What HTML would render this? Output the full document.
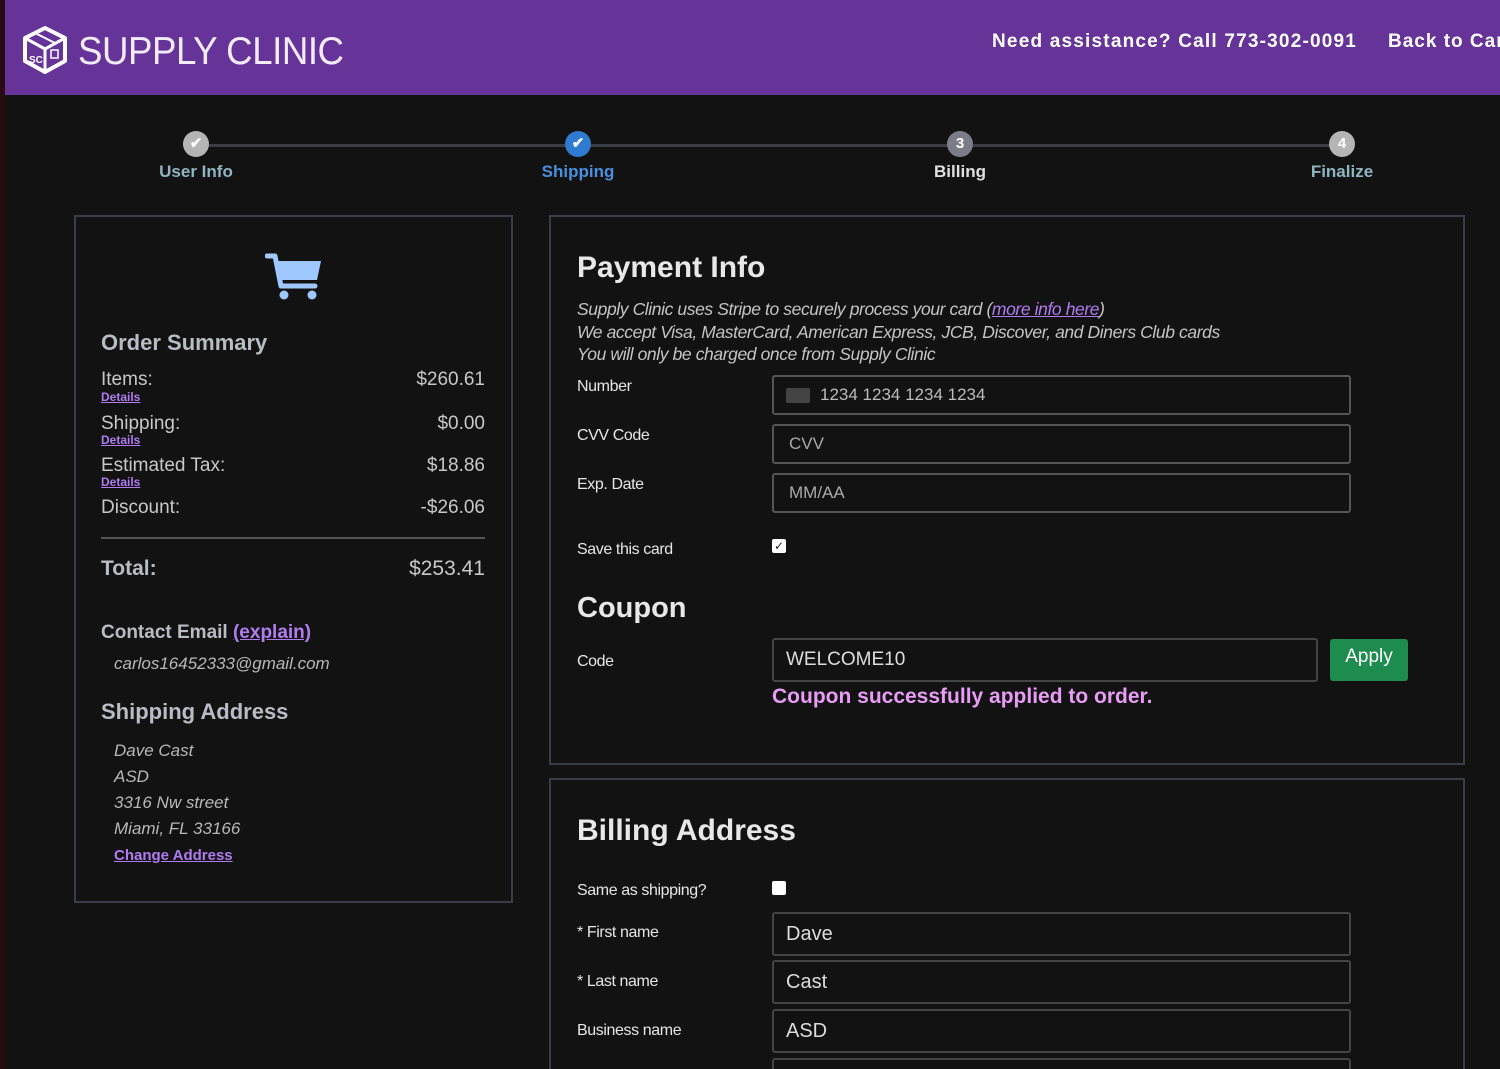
<!DOCTYPE html>
<html style="width:1500px;height:1069px;overflow:hidden"><head><meta charset="utf-8"><style>
*{box-sizing:border-box;margin:0;padding:0}
body{width:1500px;height:1069px;overflow:hidden;background:#121212;font-family:"Liberation Sans",sans-serif;color:#ddd;position:relative}
.a{position:absolute;white-space:nowrap}
.hdr{left:5px;top:0;width:1495px;height:95px;background:#663399}
.strip{left:0;top:0;width:5px;height:1069px;background:#2a0a12}
.box{position:absolute;border:2px solid #3a3d45}
.lbl{font-size:16px;color:#e6e6e6;letter-spacing:-0.4px}
.inp{position:absolute;border:2px solid #555;border-radius:3px;background:#121212;font-size:18px;color:#ddd;padding-left:12px;display:flex;align-items:center}
.det{font-size:12px;font-weight:bold;color:#b07cf0;text-decoration:underline}
.row{font-size:19px;color:#c8c8c8}
.h3{font-weight:bold;color:#b8bcc4;font-size:21px}
.it{font-style:italic;color:#b8b8b8;font-size:17px}
.step{font-weight:bold;font-size:17px;transform:translateX(-50%)}
.c{position:absolute;width:26px;height:26px;border-radius:50%;transform:translate(-50%,-50%);color:#fff;font-weight:bold;font-size:15px;text-align:center;line-height:26px}
</style></head><body>
<div class="a strip"></div>
<div class="a hdr"></div>
<svg class="a" style="left:22px;top:25px" width="46" height="50" viewBox="0 0 46 50"><path d="M23 3 L43 13 L43 36 L23 47 L3 36 L3 13 Z" fill="none" stroke="#fff" stroke-width="4" stroke-linejoin="round"/><path d="M3 13 L23 24 L43 13 M23 24 L23 47" stroke="#fff" stroke-width="3" fill="none"/><path d="M13 8 L33 18" stroke="#fff" stroke-width="2"/><text x="7" y="38" font-size="10" font-weight="bold" fill="#fff" font-family="Liberation Sans">SC</text><rect x="29" y="25" width="7" height="8" fill="none" stroke="#fff" stroke-width="1.5"/></svg>
<div class="a" style="left:78px;top:30px;font-size:39px;color:#f2ecf8;letter-spacing:-0.5px;transform:scaleX(0.94);transform-origin:left">SUPPLY CLINIC</div>
<div class="a" style="left:992px;top:31px;font-size:19px;font-weight:bold;color:#fff;letter-spacing:1.2px">Need assistance? Call 773-302-0091</div>
<div class="a" style="left:1388px;top:31px;font-size:19px;font-weight:bold;color:#fff;letter-spacing:1px">Back to Cart</div>

<div class="a" style="left:196px;top:144px;width:1146px;height:3px;background:#3c3c46"></div>
<div class="c" style="left:196px;top:144px;background:#b5b5b5">✔</div>
<div class="c" style="left:578px;top:144px;background:#2e7bcf">✔</div>
<div class="c" style="left:960px;top:144px;background:#7a7d88">3</div>
<div class="c" style="left:1342px;top:144px;background:#b5b5b5">4</div>
<div class="a step" style="left:196px;top:162px;color:#8fb5c0">User Info</div>
<div class="a step" style="left:578px;top:162px;color:#4a8fe0">Shipping</div>
<div class="a step" style="left:960px;top:162px;color:#e0e0e0">Billing</div>
<div class="a step" style="left:1342px;top:162px;color:#8fb5c0">Finalize</div>

<div class="box" style="left:74px;top:215px;width:439px;height:688px"></div>
<svg class="a" style="left:265px;top:252px" width="58" height="50" viewBox="0 0 58 50"><path d="M2 4 L10 4 L16 34 L50 34" fill="none" stroke="#9ec8ff" stroke-width="5" stroke-linecap="round" stroke-linejoin="round"/><path d="M11 9 L56 9 L52 28 L15 28 Z" fill="#9ec8ff"/><circle cx="19" cy="43" r="4.5" fill="#9ec8ff"/><circle cx="47" cy="43" r="4.5" fill="#9ec8ff"/></svg>
<div class="a h3" style="left:101px;top:330px;font-size:22px">Order Summary</div>
<div class="a row" style="left:101px;top:369px">Items:</div><div class="a row" style="right:1015px;top:369px">$260.61</div>
<div class="a det" style="left:101px;top:390px">Details</div>
<div class="a row" style="left:101px;top:413px">Shipping:</div><div class="a row" style="right:1015px;top:413px">$0.00</div>
<div class="a det" style="left:101px;top:433px">Details</div>
<div class="a row" style="left:101px;top:455px">Estimated Tax:</div><div class="a row" style="right:1015px;top:455px">$18.86</div>
<div class="a det" style="left:101px;top:475px">Details</div>
<div class="a row" style="left:101px;top:497px">Discount:</div><div class="a row" style="right:1015px;top:497px">-$26.06</div>
<div class="a" style="left:101px;top:537px;width:384px;height:2px;background:#555"></div>
<div class="a h3" style="left:101px;top:557px">Total:</div><div class="a row" style="right:1015px;top:557px;font-size:21px">$253.41</div>
<div class="a h3" style="left:101px;top:622px;font-size:19px">Contact Email <span style="color:#b07cf0;text-decoration:underline">(explain)</span></div>
<div class="a it" style="left:114px;top:654px">carlos16452333@gmail.com</div>
<div class="a h3" style="left:101px;top:699px;font-size:22px">Shipping Address</div>
<div class="a it" style="left:114px;top:741px">Dave Cast</div>
<div class="a it" style="left:114px;top:767px">ASD</div>
<div class="a it" style="left:114px;top:793px">3316 Nw street</div>
<div class="a it" style="left:114px;top:819px">Miami, FL 33166</div>
<div class="a" style="left:114px;top:847px;font-size:15px;font-weight:bold;color:#b07cf0;text-decoration:underline">Change Address</div>

<div class="box" style="left:549px;top:215px;width:916px;height:550px"></div>
<div class="a" style="left:577px;top:251px;font-size:30px;font-weight:bold;color:#e8e8e8">Payment Info</div>
<div class="a it" style="left:577px;top:298px;font-size:17.5px;color:#c4c4c4;letter-spacing:-0.4px;line-height:22.5px">Supply Clinic uses Stripe to securely process your card (<span style="color:#b07cf0;text-decoration:underline">more info here</span>)<br>We accept Visa, MasterCard, American Express, JCB, Discover, and Diners Club cards<br>You will only be charged once from Supply Clinic</div>
<div class="a lbl" style="left:577px;top:378px">Number</div>
<div class="inp" style="left:772px;top:375px;width:579px;height:40px;font-size:17px;color:#bbb"><span style="display:inline-block;width:24px;height:15px;background:#444;border-radius:2px;margin-right:10px"></span>1234 1234 1234 1234</div>
<div class="a lbl" style="left:577px;top:427px">CVV Code</div>
<div class="inp" style="left:772px;top:424px;width:579px;height:40px;font-size:17px;color:#aaa;padding-left:15px">CVV</div>
<div class="a lbl" style="left:577px;top:476px">Exp. Date</div>
<div class="inp" style="left:772px;top:473px;width:579px;height:40px;font-size:17px;color:#aaa;padding-left:15px">MM/AA</div>
<div class="a lbl" style="left:577px;top:541px">Save this card</div>
<div class="a" style="left:772px;top:539px;width:14px;height:14px;background:#fff;border-radius:2px;color:#222;font-size:12px;line-height:14px;text-align:center">✓</div>
<div class="a" style="left:577px;top:592px;font-size:29px;font-weight:bold;color:#e8e8e8">Coupon</div>
<div class="a lbl" style="left:577px;top:653px">Code</div>
<div class="inp" style="left:772px;top:638px;width:546px;height:44px;border-color:#444;font-size:19px">WELCOME10</div>
<div class="a" style="left:1330px;top:639px;width:78px;height:42px;background:#1e8c4e;border-radius:3px;color:#fff;font-size:19px;text-align:center;padding-top:7px">Apply</div>
<div class="a" style="left:772px;top:685px;font-size:21px;font-weight:bold;color:#e99cf5;letter-spacing:0px">Coupon successfully applied to order.</div>

<div class="box" style="left:549px;top:778px;width:916px;height:320px"></div>
<div class="a" style="left:577px;top:814px;font-size:30px;font-weight:bold;color:#e8e8e8">Billing Address</div>
<div class="a lbl" style="left:577px;top:882px">Same as shipping?</div>
<div class="a" style="left:772px;top:881px;width:14px;height:14px;background:#fff;border-radius:2px"></div>
<div class="a lbl" style="left:577px;top:924px">* First name</div>
<div class="inp" style="left:772px;top:912px;width:579px;height:44px;font-size:20px;border-color:#444">Dave</div>
<div class="a lbl" style="left:577px;top:973px">* Last name</div>
<div class="inp" style="left:772px;top:960px;width:579px;height:44px;font-size:20px;border-color:#444">Cast</div>
<div class="a lbl" style="left:577px;top:1022px">Business name</div>
<div class="inp" style="left:772px;top:1009px;width:579px;height:44px;font-size:20px;border-color:#444">ASD</div>
<div class="inp" style="left:772px;top:1058px;width:579px;height:44px;border-color:#444"></div>
</body></html>
